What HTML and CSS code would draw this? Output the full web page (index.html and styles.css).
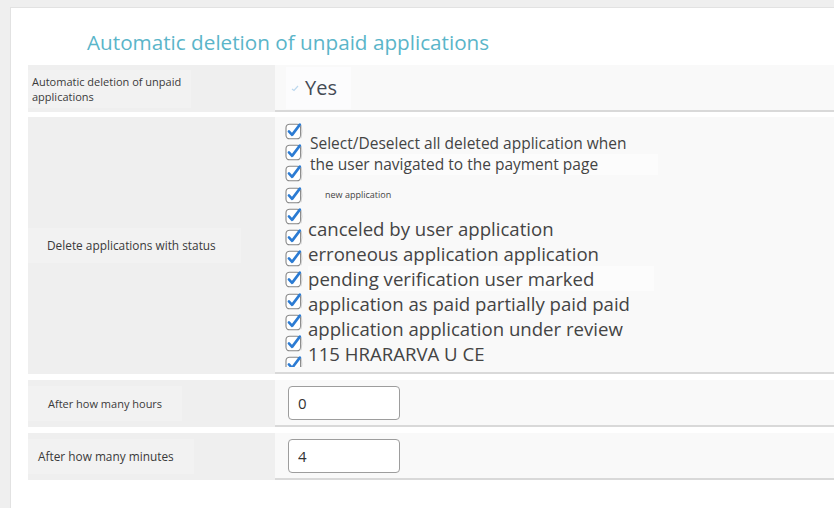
FILE: index.html
```html
<!DOCTYPE html>
<html lang="en">
<head>
<meta charset="utf-8">
<title>Automatic deletion of unpaid applications</title>
<link rel="stylesheet" href="styles.css">
</head>
<body>
<svg width="0" height="0" class="defs">
  <defs>
    <symbol id="cb" viewBox="0 0 18 18">
      <rect x="1" y="2.2" width="14.6" height="14.6" rx="3.6" fill="#fff" stroke="#878787" stroke-width="1.1"/>
      <path d="M16.3 2.8 Q17.7 9.5 15.9 16.3" fill="none" stroke="#cfcfcf" stroke-width="1"/>
      <path d="M3.9 9.4 L7.1 12.9 L14.8 2.6" fill="none" stroke="#2b7bd3" stroke-width="2.6" stroke-linecap="round" stroke-linejoin="round"/>
    </symbol>
  </defs>
</svg>
<div class="panel">
  <h2 class="title">Automatic deletion of unpaid applications</h2>
  <div class="form">
    <div class="row">
      <div class="label"><span class="label-text first">Automatic deletion of unpaid<br>applications</span></div>
      <div class="value yes-cell">
        <span class="yes"><svg class="tick" viewBox="0 0 8 8" width="8" height="8"><path d="M1 5 L3 6.5 L7 2" fill="none" stroke="#bcd8ee" stroke-width="1.2"/></svg>Yes</span>
      </div>
    </div>
    <div class="row">
      <div class="label"><span class="label-text status">Delete applications with status</span></div>
      <div class="value status-cell">
        <div class="checks">
          <svg class="cb"><use href="#cb"/></svg>
          <svg class="cb"><use href="#cb"/></svg>
          <svg class="cb"><use href="#cb"/></svg>
          <svg class="cb"><use href="#cb"/></svg>
          <svg class="cb"><use href="#cb"/></svg>
          <svg class="cb"><use href="#cb"/></svg>
          <svg class="cb"><use href="#cb"/></svg>
          <svg class="cb"><use href="#cb"/></svg>
          <svg class="cb"><use href="#cb"/></svg>
          <svg class="cb"><use href="#cb"/></svg>
          <svg class="cb"><use href="#cb"/></svg>
          <svg class="cb"><use href="#cb"/></svg>
        </div>
        <div class="opts">
          <div class="opt mid first-line">Select/Deselect all deleted application when</div>
          <div class="opt mid hl">the user navigated to the payment page</div>
          <div class="opt tiny">new application</div>
          <div class="opt big gap">canceled by user application</div>
          <div class="opt big">erroneous application application</div>
          <div class="opt big hl">pending verification user marked</div>
          <div class="opt big">application as paid partially paid paid</div>
          <div class="opt big">application application under review</div>
          <div class="opt big">115 HRARARVA U CE</div>
        </div>
      </div>
    </div>
    <div class="row">
      <div class="label"><span class="label-text hours">After how many hours</span></div>
      <div class="value input-cell"><input class="num" type="text" value="0"></div>
    </div>
    <div class="row">
      <div class="label"><span class="label-text minutes">After how many minutes</span></div>
      <div class="value input-cell"><input class="num" type="text" value="4"></div>
    </div>
  </div>
</div>
</body>
</html>
```
FILE: styles.css
```css
html, body {
  margin: 0;
  padding: 0;
}
body {
  background: #efefef;
  font-family: "Open Sans", "Noto Sans", sans-serif;
  color: #444;
  overflow: hidden;
}
.defs {
  position: absolute;
  width: 0;
  height: 0;
}
.panel {
  margin: 7px 0 0 10px;
  background: #fff;
  border-top: 1px solid #e2e2e2;
  border-left: 1px solid #e2e2e2;
  min-height: 520px;
  padding: 0 0 0 17px;
}
.title {
  margin: 0 0 9px 59px;
  padding-top: 20px;
  font-size: 20.7px;
  line-height: 28px;
  font-weight: 400;
  color: #5ab5c9;
}
.form {
  display: flex;
  flex-direction: column;
  gap: 5px;
}
.row {
  display: grid;
  grid-template-columns: 247px 1fr;
}
.row + .row + .row {
  margin-top: 1px;
}
.label {
  background: #efefef;
  display: flex;
  align-items: center;
  font-size: 11px;
  line-height: 15px;
  color: #3a3a3a;
}
.label-text {
  background: #f2f2f2;
}
.label-text.first {
  padding: 4px 10px 4px 4px;
}
.label-text.status {
  font-size: 11.85px;
  padding: 10px 25px 10px 19px;
}
.label-text.hours {
  padding: 10px 20px 10px 20px;
}
.label-text.minutes {
  font-size: 11.85px;
  padding: 10px 20px 10px 10px;
}
.value {
  background: #f9f9f9;
  border-bottom: 2px solid #d9d9d9;
}
.yes-cell {
  height: 45px;
  display: flex;
  align-items: center;
  padding-left: 11px;
}
.yes {
  display: flex;
  align-items: center;
  height: 42px;
  padding: 0 14px 0 5px;
  background: #fcfcfd;
  font-size: 20px;
  color: #444b55;
}
.tick {
  margin-right: 6px;
}
.status-cell {
  display: flex;
  align-items: flex-start;
  height: 245px;
  padding: 5px 0 5px 10px;
  overflow: hidden;
}
.checks {
  display: flex;
  flex-direction: column;
  gap: 3.2px;
  height: 245px;
  overflow: hidden;
}
.cb {
  width: 18px;
  height: 18px;
  flex: none;
}
.opts {
  margin-left: 7px;
  display: flex;
  flex-direction: column;
  align-items: flex-start;
}
.opt {
  white-space: nowrap;
  color: #444;
}
.mid {
  font-size: 15.5px;
  line-height: 21px;
}
.first-line {
  margin-top: 10.5px;
}
.hl {
  background: #fcfcfc;
  padding-right: 60px;
}
.tiny {
  font-size: 9px;
  line-height: 14px;
  margin-top: 13.8px;
  padding-left: 15px;
}
.big {
  font-size: 18.6px;
  line-height: 25px;
  margin-left: -2px;
}
.gap {
  margin-top: 13.7px;
}
.input-cell {
  padding: 6px 13px 5px;
}
.num {
  display: block;
  box-sizing: border-box;
  width: 112px;
  height: 34px;
  margin: 0;
  padding: 0 9px;
  border: 1px solid #9d9d9d;
  border-radius: 4px;
  background: #fff;
  font-family: "Open Sans", "Noto Sans", sans-serif;
  font-size: 15px;
  color: #333;
  outline: none;
}
```
